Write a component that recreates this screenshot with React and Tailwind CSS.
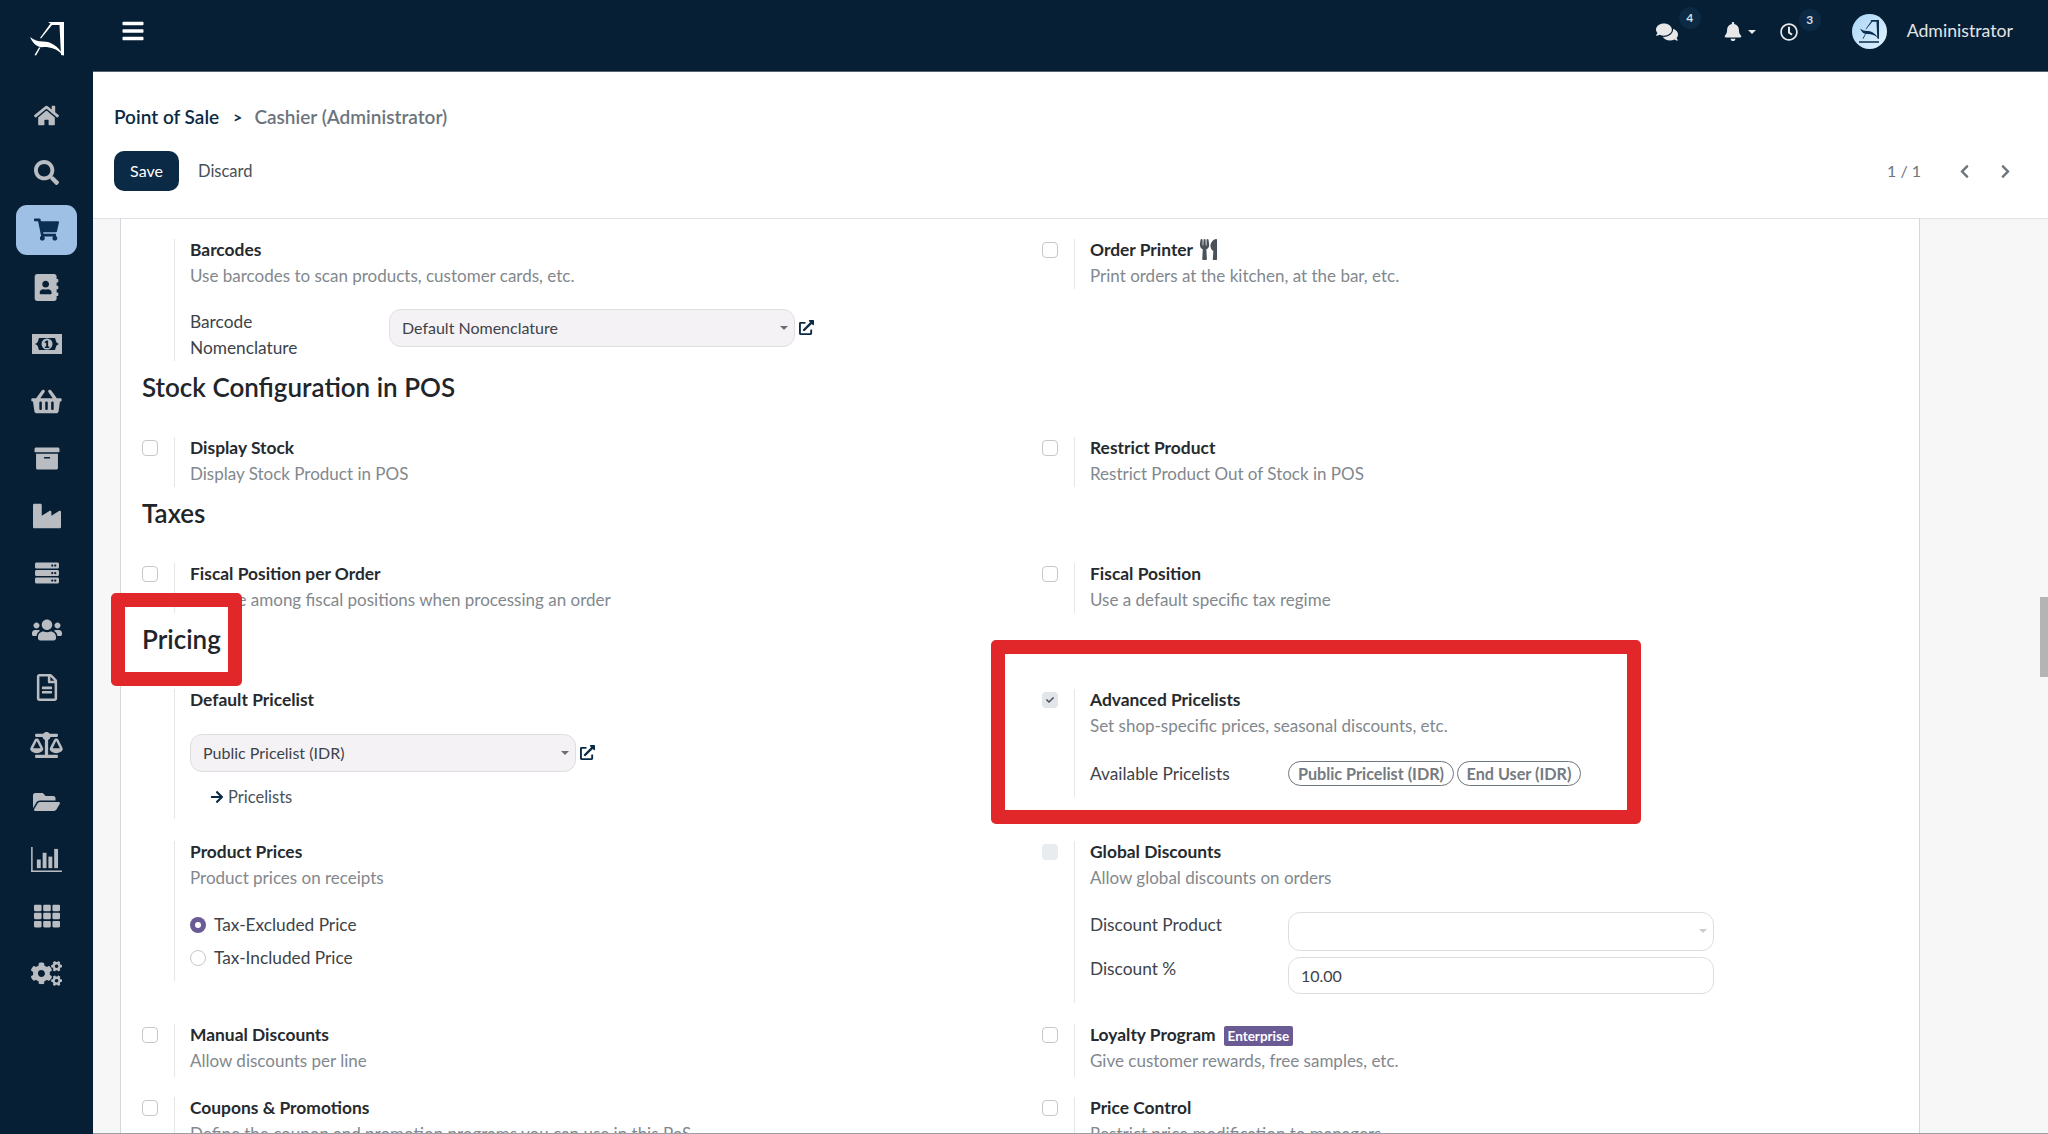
import React from "react";
import {
  FaHome, FaSearch, FaShoppingCart, FaAddressBook, FaShoppingBasket, FaArchive,
  FaIndustry, FaServer, FaUsers, FaRegFileAlt, FaBalanceScale, FaFolderOpen, FaTh, FaCogs,
  FaComments, FaBell, FaRegClock, FaChevronLeft, FaChevronRight, FaExternalLinkAlt, FaArrowRight,
  FaUtensils, FaCheck, FaBars,
} from "react-icons/fa";

function ChartIcon({ className }) {
  return (
    <svg viewBox="0 0 32 26" className={className} fill="currentColor">
      <rect x="0" y="0" width="1.6" height="26" />
      <rect x="0" y="24.4" width="32" height="1.6" />
      <rect x="6" y="13" width="4" height="9" />
      <rect x="12" y="6" width="4" height="16" />
      <rect x="18" y="10" width="4" height="12" />
      <rect x="24" y="2" width="4" height="20" />
    </svg>
  );
}

function MoneyIcon({ className }) {
  return (
    <svg viewBox="0 0 30 20" className={className} fill="currentColor">
      <path d="M0 0h30v20H0z" />
      <path d="M3 10c3-1 3-3 4-6h16c1 3 1 5 4 6-3 1-3 3-4 6H7c-1-3-1-5-4-6z" fill="#071f35" />
      <circle cx="15" cy="10" r="5.5" />
      <path d="M14.6 6.5h1.5v6h1.2V14h-4.4v-1.5h1.3V8.6l-1.2.6-.5-1.2z" fill="#071f35" />
    </svg>
  );
}

function Logo({ className, color = "#fff" }) {
  return (
    <svg viewBox="0 0 34 34" className={className} fill={color}>
      <path d="M18 0H34V33.5L31 33 29.5 3H22L11 16.5 10 16 20.5 1.5Z" />
      <path d="M0 15C4 18 8 19.5 13 19.5 21 19.5 28 24 33 33 27 27 21 25 14 25 8 26 3 22 0 15Z" />
      <path d="M4.5 33L9 25.5 10.5 25.5 6 33.5Z" />
    </svg>
  );
}

const sideIcons = [
  [FaHome, "w-[25px] h-[25px]"],
  [FaSearch, "w-[25px] h-[25px]"],
  [FaShoppingCart, "w-[25px] h-[25px]"],
  [FaAddressBook, "w-[25px] h-[27px]"],
  [MoneyIcon, "w-[30px] h-[20px]"],
  [FaShoppingBasket, "w-[31px] h-[27px]"],
  [FaArchive, "w-[26px] h-[25px]"],
  [FaIndustry, "w-[28px] h-[28px]"],
  [FaServer, "w-[28px] h-[24px]"],
  [FaUsers, "w-[30px] h-[28px]"],
  [FaRegFileAlt, "w-[24px] h-[27px]"],
  [FaBalanceScale, "w-[33px] h-[26px]"],
  [FaFolderOpen, "w-[29px] h-[24px]"],
  [ChartIcon, "w-[31px] h-[25px]"],
  [FaTh, "w-[28px] h-[26px]"],
  [FaCogs, "w-[31px] h-[27px]"],
];

function Sidebar() {
  return (
    <aside className="w-[93px] shrink-0 bg-[#071f35] flex flex-col items-center">
      <div className="h-[87px] w-full flex items-start justify-center pt-[22px]">
        <Logo className="w-[34px] h-[34px]" />
      </div>
      {sideIcons.map(([Icon, size], i) => (
        <div key={i} className="h-[57.2px] w-full flex items-center justify-center">
          {i === 2 ? (
            <div className="w-[61px] h-[50px] rounded-[11px] bg-[#9dc0e4] flex items-center justify-center text-[#0b2e53]">
              <Icon className={size} />
            </div>
          ) : (
            <Icon className={`${size} text-[#b9bdc2]`} />
          )}
        </div>
      ))}
    </aside>
  );
}

function Topbar() {
  return (
    <header className="h-[72px] shrink-0 bg-[#071f35] border-b border-[#56616b] flex items-center text-white">
      <FaBars className="ml-[29px] mb-[9px] w-[22px] h-[24px]" />
      <div className="ml-auto flex items-center pr-[35px] pb-[8px] h-full">
        <div className="relative mr-[46px]">
          <FaComments className="w-[22px] h-[20px] text-[#e8e8e8]" />
          <span className="absolute -top-[15px] left-[23px] w-[22px] h-[22px] rounded-full bg-[#0c2a44] text-[12px] font-bold text-[#d5dde5] flex items-center justify-center">4</span>
        </div>
        <FaBell className="w-[18px] h-[19px] text-[#e8e8e8]" />
        <span className="ml-[6px] mr-[24px] w-0 h-0 border-x-[4px] border-x-transparent border-t-[4px] border-t-[#e8e8e8]" />
        <div className="relative mr-[54px]">
          <FaRegClock className="w-[18px] h-[18px] text-[#e8e8e8]" />
          <span className="absolute -top-[14px] left-[19px] w-[22px] h-[22px] rounded-full bg-[#0c2a44] text-[12px] font-bold text-[#d5dde5] flex items-center justify-center">3</span>
        </div>
        <div className="w-[35px] h-[35px] rounded-full bg-gradient-to-br from-[#a9d6f7] to-[#e3f2fd] flex flex-col items-center justify-center gap-[2px]">
          <Logo className="w-[19px] h-[19px]" color="#0b2e53" />
          <span className="w-[20px] h-[2px] bg-[#3b5a78]" />
        </div>
        <span className="ml-[20px] text-[17.7px] text-[#e3e5e7]">Administrator</span>
      </div>
    </header>
  );
}

function ControlPanel() {
  return (
    <div className="h-[147px] shrink-0 bg-white border-b border-[#dee2e6] pl-[21px] pr-[36px]">
      <div className="pt-[32px] h-[79px] flex items-start text-[19px] leading-[26px] font-semibold">
        <span className="text-[#0b2a45]">Point of Sale</span>
        <span className="ml-[14px] mr-[12px] text-[#0b2a45] text-[16px] font-bold">&gt;</span>
        <span className="text-[#6c757d]">Cashier (Administrator)</span>
      </div>
      <div className="flex items-center">
        <button className="w-[65px] h-[40px] rounded-[10px] bg-[#0b2a45] text-white text-[16px]">Save</button>
        <button className="ml-[19px] text-[16.5px] text-[#495057]">Discard</button>
        <span className="ml-auto text-[16px] text-[#6c757d]">1 / 1</span>
        <FaChevronLeft className="ml-[37px] w-[13px] h-[15px] text-[#6c757d]" />
        <FaChevronRight className="ml-[28px] w-[13px] h-[15px] text-[#6c757d]" />
      </div>
    </div>
  );
}

function Checkbox({ state }) {
  if (state === "checked") {
    return (
      <span className="w-[16px] h-[16px] rounded-[4px] bg-[#e2e6ea] flex items-center justify-center text-[#495057]">
        <FaCheck className="w-[8px] h-[8px]" />
      </span>
    );
  }
  if (state === "disabled") return <span className="w-[16px] h-[16px] rounded-[4px] bg-[#e9ecef]" />;
  return <span className="w-[16px] h-[16px] rounded-[4px] border border-[#c4c8cc] bg-white" />;
}

function Setting({ check, title, desc, height = "h-[50px]", extra, children }) {
  return (
    <div className="flex items-start">
      <div className="w-[53px] shrink-0 flex justify-center pl-[5px] pt-[3px]">{check && <Checkbox state={check} />}</div>
      <div className={`${height} border-l border-[#e5e7eb] pl-[15px] flex-1`}>
        <div className="h-[21px] text-[17.4px] leading-[21px] font-bold text-[#262a2e] flex items-center">
          {title}
          {extra}
        </div>
        {desc && <div className="text-[17px] leading-[31px] text-[#82888d]">{desc}</div>}
        {children}
      </div>
    </div>
  );
}

function Heading({ children }) {
  return (
    <h2 className="h-[76px] pl-[21px] pt-[11px] text-[26px] leading-[30px] font-semibold text-[#212529]">{children}</h2>
  );
}

function Select({ value, className, link = true, tint = true }) {
  return (
    <div className="flex items-center">
      <div className={`${className} relative rounded-[12px] border border-[#dfdde0] ${tint ? "bg-[#f5f2f5]" : "bg-white"} text-[16px] text-[#3d4349] pl-[12px] flex items-center`}>
        {value}
        <span className={`absolute right-[6px] top-[16px] w-0 h-0 border-x-[4px] border-x-transparent border-t-[4px] ${tint ? "border-t-[#6f6a76]" : "border-t-[#c9cdd1]"}`} />
      </div>
      {link && <FaExternalLinkAlt className="ml-[4px] mb-[2px] w-[15px] h-[15px] text-[#0b2a45]" />}
    </div>
  );
}

function Pill({ children, className }) {
  return (
    <span className={`${className} h-[25px] rounded-full border border-[#6f767d] text-[16.2px] font-bold text-[#757b81] flex items-center justify-center`}>{children}</span>
  );
}

function Radio({ checked, label }) {
  return (
    <div className="h-[33px] flex items-center">
      {checked ? (
        <span className="w-[16px] h-[16px] rounded-full bg-[#6b5b95] flex items-center justify-center">
          <span className="w-[6px] h-[6px] rounded-full bg-white" />
        </span>
      ) : (
        <span className="w-[16px] h-[16px] rounded-full border border-[#c4c8cc] bg-white" />
      )}
      <span className="ml-[8px] text-[17.3px] text-[#3d4349]">{label}</span>
    </div>
  );
}

function Settings() {
  return (
    <div className="pt-[20px]">
      <div className="grid grid-cols-[900px_898px] h-[122px]">
        <Setting title="Barcodes" desc="Use barcodes to scan products, customer cards, etc." height="h-[122px]">
          <div className="flex items-start mt-[18px]">
            <div className="w-[199px] text-[17.3px] leading-[26px] text-[#3d4349]">Barcode<br />Nomenclature</div>
            <Select value="Default Nomenclature" className="w-[406px] h-[38px]" />
          </div>
        </Setting>
        <Setting
          check="empty"
          title="Order Printer"
          desc="Print orders at the kitchen, at the bar, etc."
          extra={<FaUtensils className="ml-[6px] w-[19px] h-[21px] text-[#4b5158]" />}
        />
      </div>
      <Heading>Stock Configuration in POS</Heading>
      <div className="grid grid-cols-[900px_898px]">
        <Setting check="empty" title="Display Stock" desc="Display Stock Product in POS" />
        <Setting check="empty" title="Restrict Product" desc="Restrict Product Out of Stock in POS" />
      </div>
      <Heading>Taxes</Heading>
      <div className="grid grid-cols-[900px_898px]">
        <Setting check="empty" title="Fiscal Position per Order" desc="Choose among fiscal positions when processing an order" />
        <Setting check="empty" title="Fiscal Position" desc="Use a default specific tax regime" />
      </div>
      <Heading>Pricing</Heading>
      <div className="grid grid-cols-[900px_898px] h-[152px]">
        <Setting title="Default Pricelist" height="h-[130px]">
          <div className="mt-[24px]">
            <Select value="Public Pricelist (IDR)" className="w-[386px] h-[38px]" />
          </div>
          <div className="mt-[13px] ml-[20px] flex items-center text-[16.5px] text-[#4b5158]">
            <FaArrowRight className="w-[14px] h-[14px] text-[#0b2a45] mr-[4px]" />
            Pricelists
          </div>
        </Setting>
        <Setting check="checked" title="Advanced Pricelists" desc="Set shop-specific prices, seasonal discounts, etc." height="h-[108px]">
          <div className="flex items-center mt-[20px]">
            <div className="w-[198px] text-[17.3px] text-[#3d4349]">Available Pricelists</div>
            <Pill className="w-[166px]">Public Pricelist (IDR)</Pill>
            <Pill className="w-[124px] ml-[3px]">End User (IDR)</Pill>
          </div>
        </Setting>
      </div>
      <div className="grid grid-cols-[900px_898px] h-[183px]">
        <Setting title="Product Prices" desc="Product prices on receipts" height="h-[140px]">
          <div className="mt-[15px]">
            <Radio checked label="Tax-Excluded Price" />
            <Radio label="Tax-Included Price" />
          </div>
        </Setting>
        <Setting check="disabled" title="Global Discounts" desc="Allow global discounts on orders" height="h-[162px]">
          <div className="flex items-start mt-[19px]">
            <div className="w-[198px] text-[17.3px] leading-[24px] pt-[1px] text-[#3d4349]">Discount Product</div>
            <Select value="" className="w-[426px] h-[39px]" link={false} tint={false} />
          </div>
          <div className="flex items-start mt-[6px]">
            <div className="w-[198px] text-[17.3px] leading-[24px] text-[#3d4349]">Discount %</div>
            <Select value="10.00" className="w-[426px] h-[37px] [&>span]:hidden" link={false} tint={false} />
          </div>
        </Setting>
      </div>
      <div className="grid grid-cols-[900px_898px] h-[73px]">
        <Setting check="empty" title="Manual Discounts" desc="Allow discounts per line" height="h-[53px]" />
        <Setting
          check="empty"
          title="Loyalty Program"
          desc="Give customer rewards, free samples, etc."
          height="h-[53px]"
          extra={<span className="ml-[8px] mt-[3px] h-[20px] px-[4px] rounded-[2px] bg-[#6b5b95] text-white text-[13.5px] font-bold leading-[20px]">Enterprise</span>}
        />
      </div>
      <div className="grid grid-cols-[900px_898px]">
        <Setting check="empty" title="Coupons &amp; Promotions" desc="Define the coupon and promotion programs you can use in this PoS." />
        <Setting check="empty" title="Price Control" desc="Restrict price modification to managers." />
      </div>
    </div>
  );
}

export default function App() {
  return (
    <div className="relative flex w-[2048px] h-[1134px] overflow-hidden font-['Lato','Open_Sans',sans-serif]">
      <Sidebar />
      <div className="flex-1 min-w-0 flex flex-col">
        <Topbar />
        <ControlPanel />
        <main className="flex-1 min-h-0 bg-[#f7f7f7] overflow-hidden border-b border-[#9aa0a6]">
          <div className="ml-[27px] w-[1800px] h-full bg-white border-x border-[#d5d8db] overflow-hidden">
            <Settings />
          </div>
        </main>
      </div>
      {/* annotation boxes and scrollbar sit over the page */}
      <div className="absolute left-[111px] top-[593px] w-[131px] h-[93px] border-[14px] border-[#e2272b] rounded-[5px]" />
      <div className="absolute left-[991px] top-[640px] w-[650px] h-[184px] border-[14px] border-[#e2272b] rounded-[5px]" />
      <div className="absolute left-[2040px] top-[597px] w-[8px] h-[80px] bg-[#b4b4b4]" />
    </div>
  );
}
